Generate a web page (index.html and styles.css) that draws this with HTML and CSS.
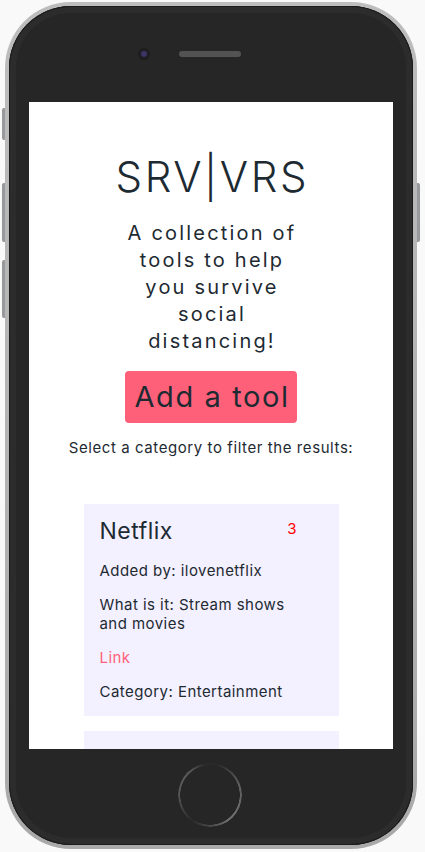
FILE: index.html
```html
<!DOCTYPE html>
<html lang="en">
<head>
<meta charset="utf-8">
<title>SRV|VRS</title>
<link rel="stylesheet" href="styles.css">
</head>
<body>
<div class="device">
  <span class="side-btn side-mute"></span>
  <span class="side-btn side-vol-up"></span>
  <span class="side-btn side-vol-down"></span>
  <span class="side-btn side-power"></span>
  <div class="frame">
    <div class="top-bar">
      <span class="camera"><span class="lens"></span></span>
      <span class="speaker"></span>
    </div>
    <main class="screen">
      <h1 class="title">SRV|VRS</h1>
      <p class="tagline">A collection of tools to help you survive social distancing!</p>
      <a class="add-btn" href="#">Add a tool</a>
      <p class="filter-label">Select a category to filter the results:</p>
      <div class="cards">
        <article class="card">
          <div class="card-head">
            <h2 class="card-title">Netflix</h2>
            <span class="votes">3</span>
          </div>
          <p class="card-line">Added by: ilovenetflix</p>
          <p class="card-line">What is it: Stream shows and movies</p>
          <p class="card-line"><a class="card-link" href="#">Link</a></p>
          <p class="card-line">Category: Entertainment</p>
        </article>
        <article class="card card-next"></article>
      </div>
    </main>
    <div class="bottom-bar">
      <span class="home"></span>
    </div>
  </div>
</div>
</body>
</html>
```

FILE: styles.css
```css
* { box-sizing: border-box; }

body {
  margin: 0;
  background: #f9f9f9;
  font-family: Inter, "Liberation Sans", sans-serif;
  color: #1e2a32;
}

.device {
  position: relative;
  width: 412px;
  height: 847px;
  margin: 2px 0 0 5px;
  padding: 4px;
  border-radius: 66px;
  background: linear-gradient(180deg, #bdbdbd, #a9a9a9);
}

.side-btn {
  position: absolute;
  width: 3px;
  background: #98999d;
  border-radius: 2px 0 0 2px;
}
.side-mute { left: -3px; top: 106px; height: 32px; }
.side-vol-up { left: -3px; top: 181px; height: 59px; }
.side-vol-down { left: -3px; top: 258px; height: 58px; }
.side-power { right: -3px; top: 181px; height: 59px; border-radius: 0 2px 2px 0; }

.frame {
  display: flex;
  flex-direction: column;
  align-items: center;
  height: 100%;
  border-radius: 62px;
  background: #262626;
  box-shadow: inset 0 0 0 1px #1b1b1b, inset 0 0 0 7px #2c2c2c;
}

.top-bar {
  display: flex;
  align-items: center;
  align-self: stretch;
  height: 96px;
  padding-left: 129px;
  gap: 29px;
}

.camera {
  display: flex;
  align-items: center;
  justify-content: center;
  width: 12px;
  height: 12px;
  border-radius: 50%;
  background: #1d1d1f;
}
.lens {
  width: 6px;
  height: 6px;
  border-radius: 50%;
  background: #3b3566;
}

.speaker {
  width: 62px;
  height: 6px;
  border-radius: 3px;
  background-color: #3f3f3f;
  background-image: radial-gradient(circle, #5a5a5a 0.6px, transparent 1px);
  background-size: 2px 2px;
}

.screen {
  display: flex;
  flex-direction: column;
  align-items: center;
  width: 364px;
  height: 647px;
  flex-shrink: 0;
  overflow: hidden;
  background: #fff;
}

.title {
  margin: 50px 0 0;
  padding-left: 2.6px;
  font-size: 42px;
  line-height: 50px;
  font-weight: 300;
  letter-spacing: 2.6px;
}

.tagline {
  width: 182px;
  margin: 18px 0 0;
  padding-left: 2px;
  font-size: 20px;
  line-height: 27px;
  text-align: center;
  letter-spacing: 2.2px;
}

.add-btn {
  margin-top: 16px;
  padding: 0 7px 0 9px;
  height: 52px;
  line-height: 52px;
  border-radius: 4px;
  background: #ff6079;
  color: #1e2a32;
  font-size: 29px;
  letter-spacing: 1.6px;
  text-decoration: none;
}

.filter-label {
  margin: 16px 0 0;
  font-size: 15px;
  line-height: 18px;
  letter-spacing: 0.58px;
}

.cards {
  display: flex;
  flex-direction: column;
  gap: 15px;
  margin-top: 47px;
}

.card {
  width: 255px;
  padding: 13px 26px 15px 16px;
  background: #f3f0ff;
}

.card-next {
  height: 120px;
}

.card-head {
  display: flex;
  align-items: flex-start;
  justify-content: space-between;
  padding-right: 16px;
}

.card-title {
  margin: 0;
  font-size: 23px;
  line-height: 28px;
  font-weight: 400;
  letter-spacing: 0.5px;
}

.votes {
  margin-top: 3px;
  font-size: 15px;
  line-height: 18px;
  color: #ff0000;
}

.card-line {
  margin: 15.5px 0 0;
  font-size: 15px;
  line-height: 18.5px;
  letter-spacing: 0.45px;
}
.card-head + .card-line { margin-top: 17px; }

.card-link {
  color: #ff6079;
  text-decoration: none;
}

.bottom-bar {
  display: flex;
  justify-content: center;
  align-self: stretch;
  padding-top: 14px;
  padding-right: 2px;
}

.home {
  width: 64px;
  height: 64px;
  border-radius: 50%;
  background: conic-gradient(#2a2a2a 15deg, #5e5e5e 70deg, #707070 140deg, #2a2a2a 215deg, #555 270deg, #5a5a5a 320deg, #2a2a2a 350deg);
  -webkit-mask: radial-gradient(circle closest-side, transparent calc(100% - 2.5px), #000 calc(100% - 2px));
  mask: radial-gradient(circle closest-side, transparent calc(100% - 2.5px), #000 calc(100% - 2px));
}
```
